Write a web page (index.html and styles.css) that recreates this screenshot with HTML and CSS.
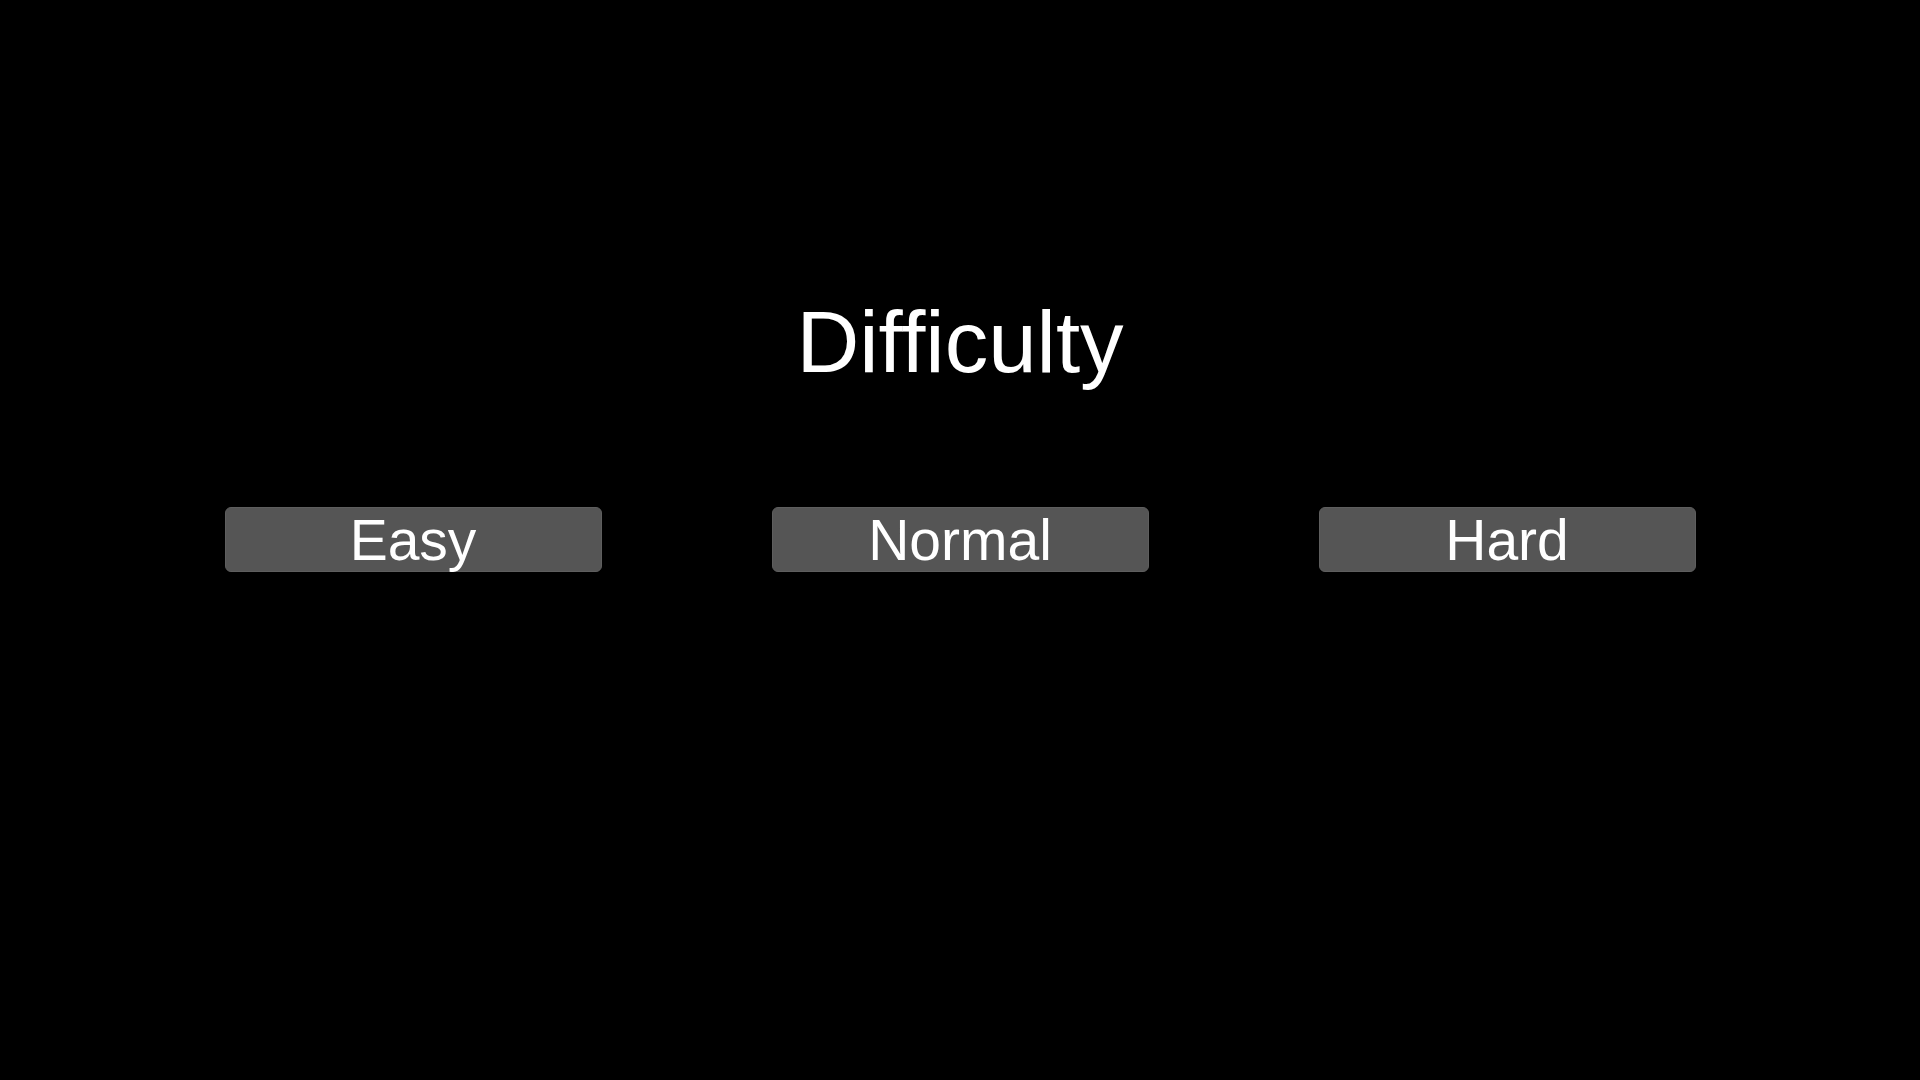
FILE: index.html
```html
<!DOCTYPE html>
<html lang="en">
<head>
<meta charset="utf-8">
<title>Difficulty</title>
<link rel="stylesheet" href="styles.css">
</head>
<body>
<main class="screen">
  <h1 class="title">Difficulty</h1>
  <div class="options">
    <button class="option">Easy</button>
    <button class="option">Normal</button>
    <button class="option">Hard</button>
  </div>
</main>
</body>
</html>
```
FILE: styles.css
```css
html, body {
  margin: 0;
  padding: 0;
  background: #000;
  width: 100%;
  height: 100%;
}
.screen {
  display: flex;
  flex-direction: column;
  align-items: center;
  padding-top: 292px;
  font-family: "Liberation Sans", Arial, sans-serif;
  color: #fff;
}
.title {
  margin: 0;
  font-size: 87px;
  font-weight: 400;
  line-height: 100px;
  height: 100px;
}
.options {
  display: flex;
  gap: 170px;
  margin-top: 115px;
}
.option {
  box-sizing: border-box;
  width: 377px;
  height: 65px;
  padding: 0;
  background: #555;
  border: 1px solid #5e5e5e;
  border-radius: 6px;
  color: #fff;
  font-family: "Liberation Sans", Arial, sans-serif;
  font-size: 57px;
  line-height: 62px;
  text-align: center;
}
```
